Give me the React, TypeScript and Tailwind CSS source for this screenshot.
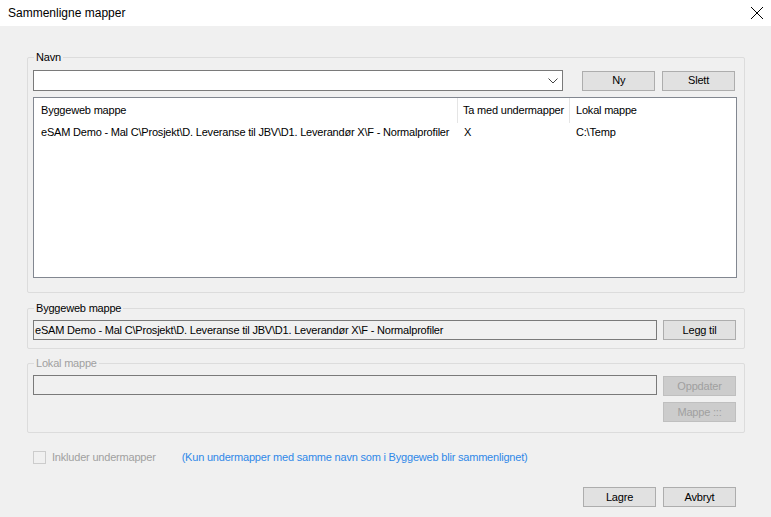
import React from 'react';

const font = { fontFamily: '"Liberation Sans", Arial, sans-serif' };

interface BtnProps {
  label: string;
  disabled?: boolean;
  className?: string;
}

const WinButton: React.FC<BtnProps> = ({ label, disabled, className = '' }) => (
  <button
    disabled={disabled}
    className={`w-[73px] h-[20px] border text-[11px] tracking-[-0.2px] leading-none flex items-center justify-center ${
      disabled ? 'bg-[#cccccc] border-[#bfbfbf] text-[#a0a0a0]' : 'bg-[#e1e1e1] border-[#adadad] text-black'
    } ${className}`}
  >
    {label}
  </button>
);

interface GroupProps {
  title: string;
  disabled?: boolean;
  className?: string;
  children: React.ReactNode;
}

const GroupBox: React.FC<GroupProps> = ({ title, disabled, className = '', children }) => (
  <div className={`relative border border-[#dcdcdc] rounded-[2px] ${className}`}>
    <span
      className={`absolute -top-[8px] left-[6px] px-[2px] bg-[#f0f0f0] text-[11px] tracking-[-0.2px] leading-[14px] ${
        disabled ? 'text-[#a0a0a0]' : 'text-black'
      }`}
    >
      {title}
    </span>
    {children}
  </div>
);

export default function App() {
  const path = 'eSAM Demo - Mal C\\Prosjekt\\D. Leveranse til JBV\\D1. Leverandør X\\F - Normalprofiler';

  return (
    <div className="w-[771px] h-[517px] bg-[#f0f0f0] flex flex-col overflow-hidden" style={font}>
      {/* tittellinje */}
      <div className="h-[26px] bg-white flex items-center justify-between pl-[8px] pr-[5px] shrink-0">
        <span className="text-[12px] text-black">Sammenligne mapper</span>
        <svg width="14" height="14" viewBox="0 0 14 14" className="mr-[2px]">
          <path d="M1 1 L13 13 M13 1 L1 13" stroke="#000" strokeWidth="1" fill="none" />
        </svg>
      </div>

      <div className="ml-[27px] pt-[31px] w-[718px] flex flex-col text-[11px] tracking-[-0.2px]">
        {/* Navn */}
        <GroupBox title="Navn" className="h-[236px] pl-[5px] pt-[12px] pr-[9px]">
          <div className="flex items-center">
            <div className="w-[531px] h-[21px] bg-white border border-[#7a7a7a] flex items-center justify-end pr-[4px]">
              <svg width="10" height="6" viewBox="0 0 10 6">
                <path d="M0.5 0.5 L5 5 L9.5 0.5" stroke="#444" strokeWidth="1" fill="none" />
              </svg>
            </div>
            <WinButton label="Ny" className="ml-[19px]" />
            <WinButton label="Slett" className="ml-[7px]" />
          </div>
          <div className="mt-[6px] h-[181px] w-[704px] bg-white border border-[#828790] text-black">
            <div className="flex h-[25px] items-center">
              <div className="w-[424px] pl-[7px] h-full flex items-center border-r border-[#e5e5e5]">Byggeweb mappe</div>
              <div className="w-[112px] pl-[5px] h-full flex items-center border-r border-[#e5e5e5]">Ta med undermapper</div>
              <div className="pl-[6px]">Lokal mappe</div>
            </div>
            <div className="flex h-[18px] items-center">
              <div className="w-[424px] pl-[7px] whitespace-nowrap overflow-hidden">{path}</div>
              <div className="w-[112px] pl-[6px]">X</div>
              <div className="pl-[6px]">C:\Temp</div>
            </div>
          </div>
        </GroupBox>

        {/* Byggeweb mappe */}
        <GroupBox title="Byggeweb mappe" className="mt-[15px] h-[41px] pl-[5px] pt-[11px]">
          <div className="flex items-center">
            <div className="w-[624px] h-[20px] bg-[#f0f0f0] border border-[#7a7a7a] flex items-center pl-[1px] text-black whitespace-nowrap overflow-hidden">
              {path}
            </div>
            <WinButton label="Legg til" className="ml-[6px]" />
          </div>
        </GroupBox>

        {/* Lokal mappe */}
        <GroupBox title="Lokal mappe" disabled className="mt-[14px] h-[70px] pl-[5px] pt-[11px]">
          <div className="flex items-start">
            <div className="w-[624px] h-[20px] bg-[#f0f0f0] border border-[#7a7a7a]" />
            <div className="ml-[6px] flex flex-col gap-[6px] pt-[1px]">
              <WinButton label="Oppdater" disabled />
              <WinButton label="Mappe :::" disabled />
            </div>
          </div>
        </GroupBox>

        {/* Inkluder undermapper */}
        <div className="mt-[17px] flex items-center h-[14px] pl-[6px]">
          <div className="w-[13px] h-[13px] border border-[#cccccc] bg-[#f0f0f0]" />
          <span className="ml-[6px] text-[#a0a0a0]">Inkluder undermapper</span>
          <span className="ml-[26px] text-[#2f88e8]">(Kun undermapper med samme navn som i Byggeweb blir sammenlignet)</span>
        </div>

        <div className="mt-[23px] flex justify-end gap-[7px] pr-[9px]">
          <WinButton label="Lagre" />
          <WinButton label="Avbryt" />
        </div>
      </div>
    </div>
  );
}
